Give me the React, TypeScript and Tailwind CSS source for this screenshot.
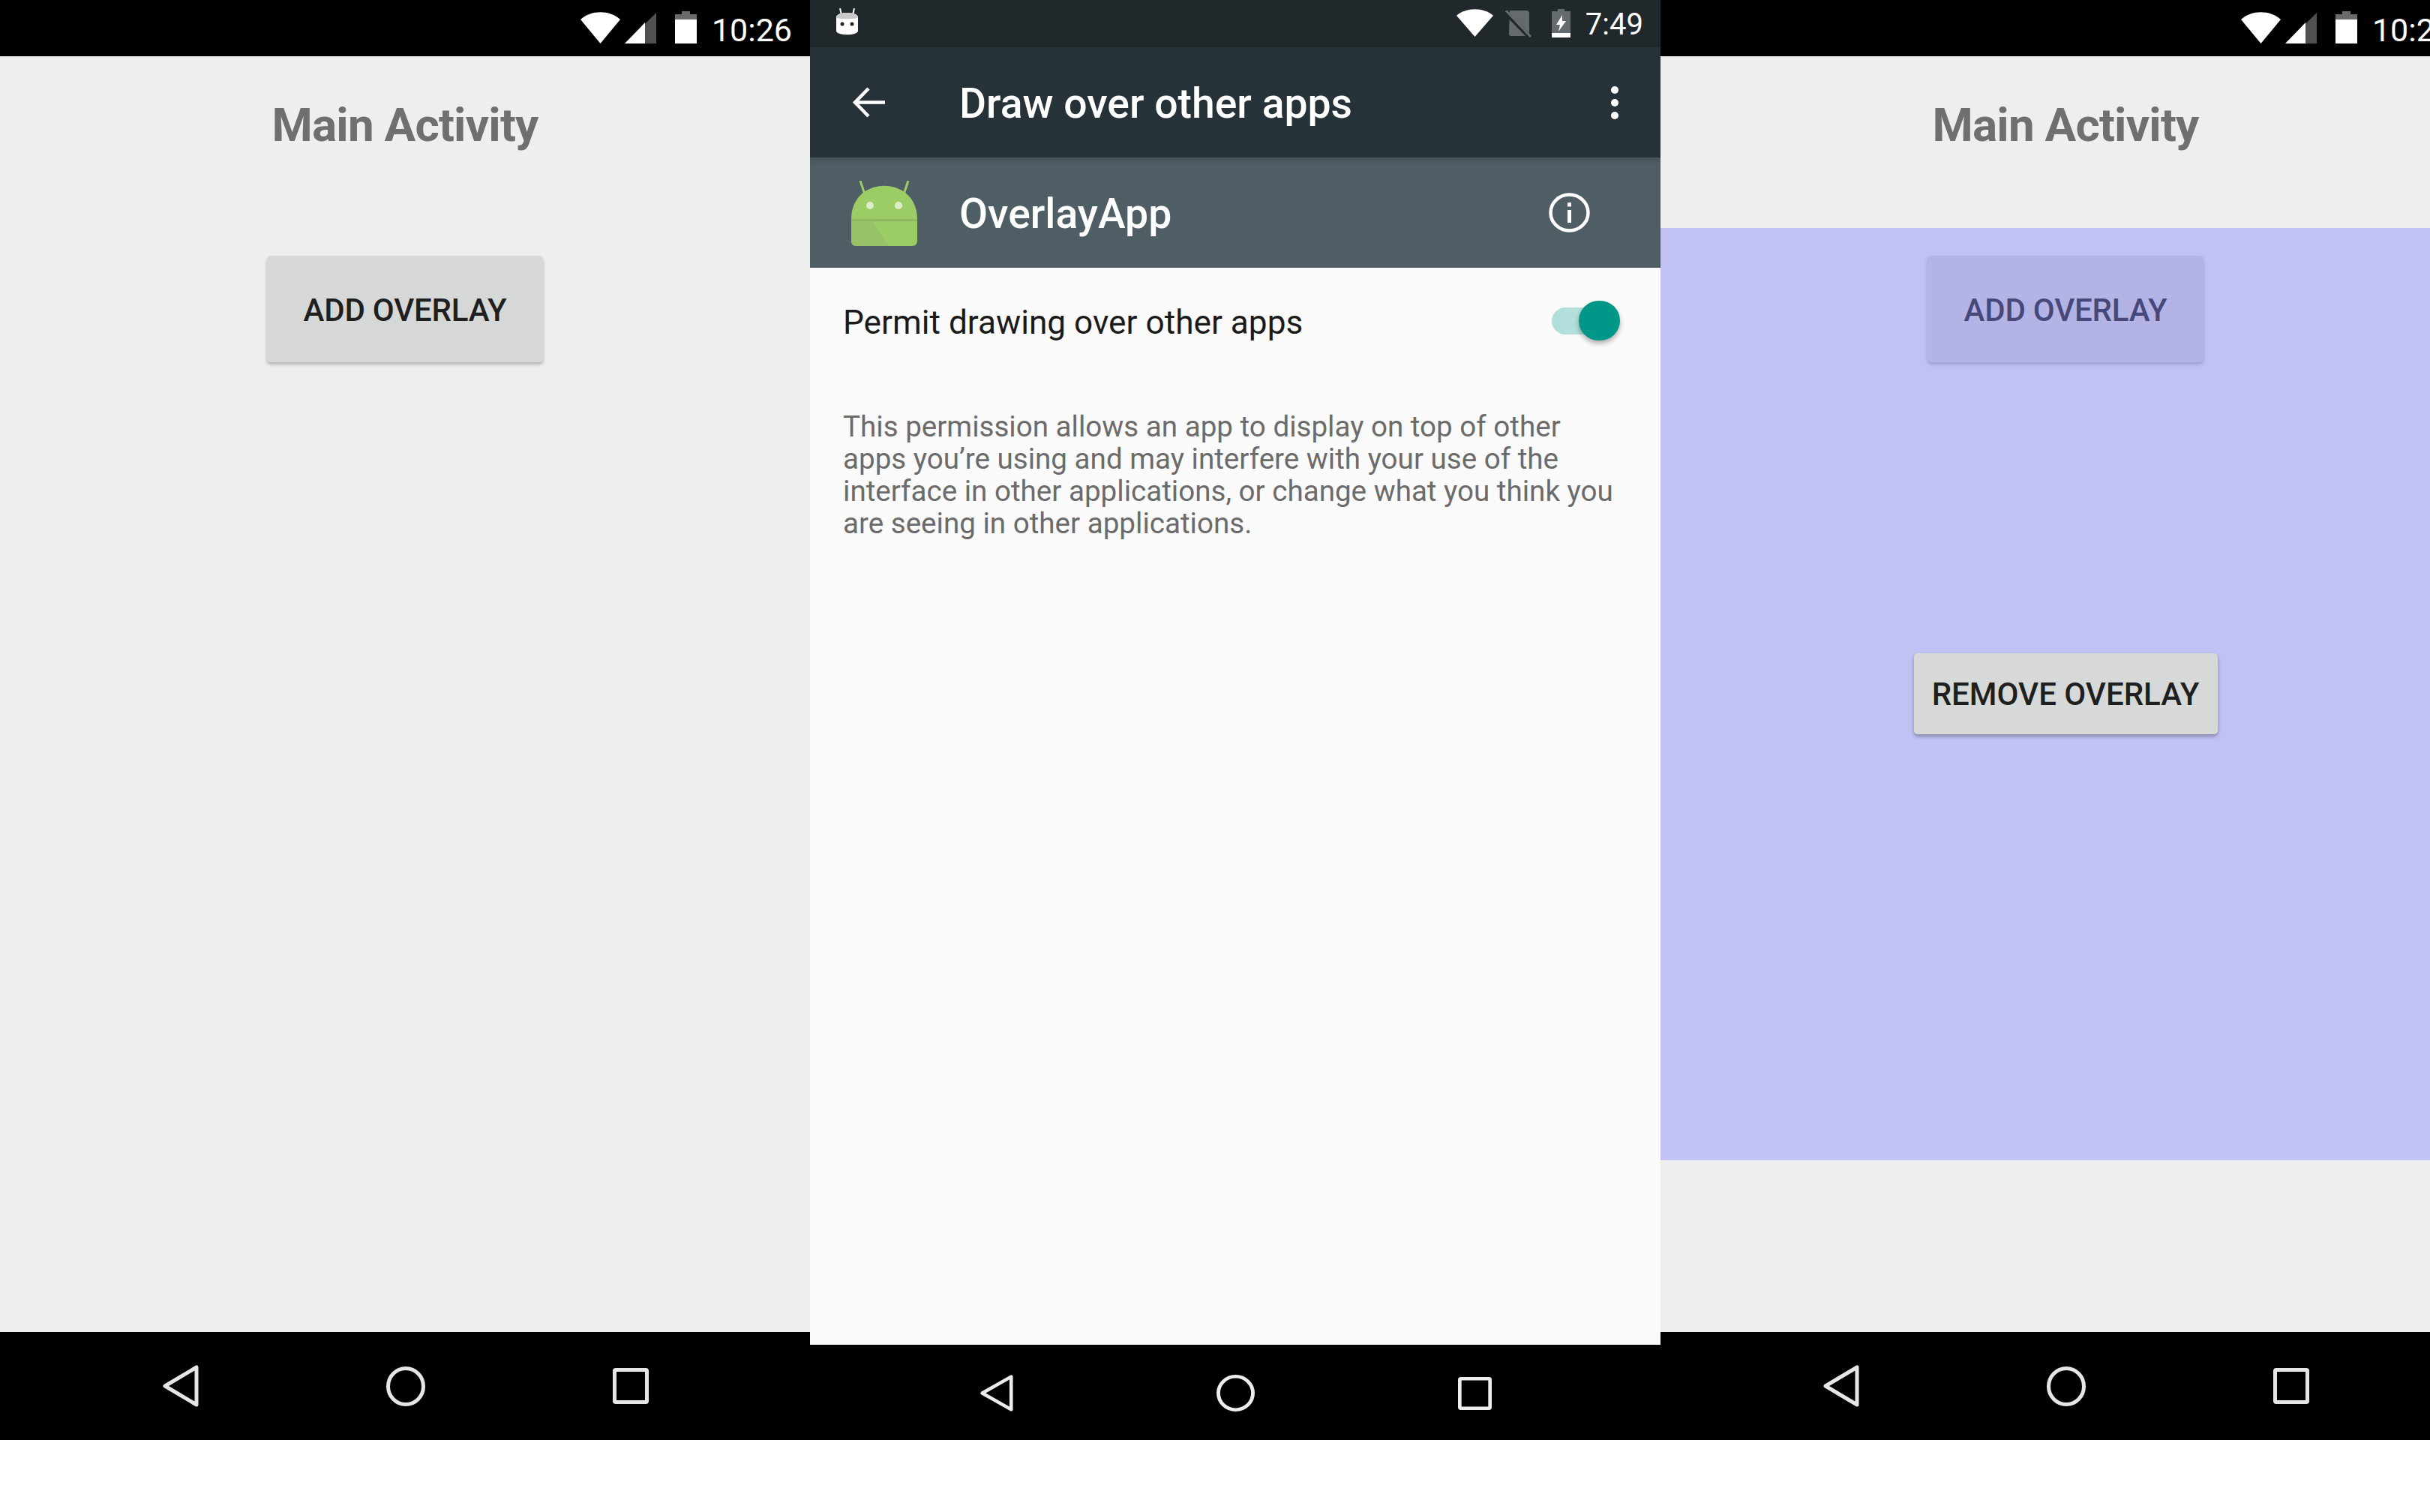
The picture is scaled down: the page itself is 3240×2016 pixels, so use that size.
import React from "react";

const font = { fontFamily: '"Roboto", sans-serif' };

function Wifi({ className }: { className: string }) {
  return (
    <svg className={className} viewBox="0 0 53 42" preserveAspectRatio="none">
      <path d="M0 10 C14 -3 39 -3 53 10 L26.5 42 Z" fill="#fff" />
    </svg>
  );
}

function Signal() {
  return (
    <svg className="w-[42px] h-[41px] ml-[6px] mt-[1px]" viewBox="0 0 42 41">
      <path d="M42 0 V41 H0 Z" fill="#505050" />
      <path d="M19 21.5 L27 13 V41 H0 Z" fill="#fff" />
    </svg>
  );
}

function Battery({ className, charging }: { className: string; charging?: boolean }) {
  if (charging) {
    return (
      <svg className={className} viewBox="0 0 25 38" preserveAspectRatio="none">
        <path d="M8 0 H17 V3 H25 V38 H0 V3 H8 Z" fill="#646a6d" />
        <rect x="0" y="32" width="25" height="6" fill="#fff" />
        <path d="M14 8 L6 21 H11 L9 30 L19 16 H14 Z" fill="#fff" />
      </svg>
    );
  }
  return (
    <svg className={className} viewBox="0 0 29 43">
      <path d="M9 0 H20 V4 H29 V11 H0 V4 H9 Z" fill="#6a6a6a" />
      <rect x="0" y="11" width="29" height="32" fill="#fff" />
    </svg>
  );
}

function NavIcons({ mid }: { mid?: boolean }) {
  const stroke = mid ? "#ededed" : "#e6e6e6";
  return (
    <div className={mid ? "flex items-center justify-center gap-[271px] h-full pt-[2px]" : "flex items-center justify-center gap-[250px] h-full w-[1080px]"}>
      <svg className={mid ? "w-[45px] h-[49px]" : "w-[49px] h-[56px]"} viewBox="0 0 49 56" preserveAspectRatio="none">
        <path d="M46 3 V53 L4 28 Z" fill="none" stroke={stroke} strokeWidth="5" strokeLinejoin="round" />
      </svg>
      <svg className={mid ? "w-[51px] h-[49px]" : "w-[52px] h-[53px]"} viewBox="0 0 52 53" preserveAspectRatio="none">
        <ellipse cx="26" cy="26.5" rx="23.5" ry="24" fill="none" stroke={stroke} strokeWidth="5" />
      </svg>
      <svg className={mid ? "w-[45px] h-[44px]" : "w-[48px] h-[48px]"} viewBox="0 0 48 48" preserveAspectRatio="none">
        <rect x="2.5" y="2.5" width="43" height="43" rx="1.5" fill="none" stroke={stroke} strokeWidth="5" />
      </svg>
    </div>
  );
}

function MainScreen({ overlay }: { overlay?: boolean }) {
  return (
    <div className="relative w-[1080px] h-[1920px] shrink-0 flex flex-col bg-[#eeeeee]">
      <div className="h-[75px] shrink-0 bg-black flex items-start justify-end pr-[24px] text-white">
        <div className="flex items-start mt-[16px]">
          <Wifi className="w-[53px] h-[42px]" />
          <Signal />
          <Battery className="w-[29px] h-[43px] ml-[25px] -mt-[1px]" />
          <span className="ml-[20px] mt-[2px] text-[43px] leading-[44px]">10:26</span>
        </div>
      </div>
      <div className="flex-1 flex flex-col items-center">
        <h1 className="mt-[62px] text-[62px] leading-[60px] font-bold tracking-[-0.8px] text-[#6f6f6f]">Main Activity</h1>
        <div className="mt-[144px] w-[368px] h-[142px] pt-[2px] rounded-[5px] bg-[#d6d7d7] shadow-[0_3px_4px_rgba(0,0,0,0.25)] flex items-center justify-center text-[42px] tracking-[-0.2px] font-medium text-[#1f1f1f]">
          ADD OVERLAY
        </div>
      </div>
      <div className="h-[144px] shrink-0 bg-black">
        <NavIcons />
      </div>
      {overlay && (
        <div className="absolute left-0 right-0 top-[304px] h-[1243px] bg-[#8181fb]/[0.41] flex justify-center">
          <div className="mt-[567px] w-[405px] h-[108px] pt-[1px] rounded-[5px] bg-[#d7d9d9] shadow-[0_3px_5px_rgba(0,0,0,0.3)] flex items-center justify-center text-[42px] font-medium text-[#1f1f1f]">
            REMOVE OVERLAY
          </div>
        </div>
      )}
    </div>
  );
}

function SettingsScreen() {
  return (
    <div className="w-[1134px] h-[1920px] shrink-0 flex flex-col bg-[#fafafa]">
      <div className="h-[63px] shrink-0 bg-[#21282c] flex items-start text-white">
        <svg className="w-[33px] h-[36px] ml-[33px] mt-[11px]" viewBox="0 0 33 36" preserveAspectRatio="none">
          <path d="M7 0 L9 9 M26 0 L24 9" stroke="#fff" strokeWidth="2" />
          <path d="M2 12 C2 4 31 4 31 12 V30 C31 37 2 37 2 30 Z" fill="#fff" />
          <path d="M2 12 C2 4 31 4 31 12 C31 15 2 15 2 12 Z" fill="#c9c9c9" />
          <circle cx="10" cy="21" r="2.5" fill="#21282c" />
          <circle cx="23" cy="21" r="2.5" fill="#21282c" />
        </svg>
        <div className="flex-1" />
        <Wifi className="w-[49px] h-[37px] mt-[12px]" />
        <svg className="w-[37px] h-[36px] ml-[16px] mt-[14px]" viewBox="0 0 37 36" preserveAspectRatio="none">
          <path d="M6 0 H28 Q32 0 32 4 V34 H8 Q5 34 5 31 Z" fill="#646a6d" />
          <path d="M1 3 L33 36" stroke="#21282c" strokeWidth="6" />
          <path d="M1 0 L34 35" stroke="#646a6d" strokeWidth="3" />
        </svg>
        <Battery className="w-[25px] h-[38px] ml-[25px] mt-[12px]" charging />
        <span className="ml-[20px] mr-[23px] mt-[13px] text-[40px] leading-[40px]">7:49</span>
      </div>
      <div className="h-[147px] shrink-0 bg-[#263238] flex items-center text-white">
        <svg className="w-[44px] h-[41px] ml-[56px]" viewBox="0 0 44 41" preserveAspectRatio="none">
          <path d="M44 20.5 H5 M22 2 L4 20.5 L22 39" fill="none" stroke="#fff" strokeWidth="4.5" />
        </svg>
        <span className="ml-[99px] mt-[4px] text-[55.3px] leading-[60px] font-medium flex-1">Draw over other apps</span>
        <div className="flex flex-col gap-[7px] mr-[56px]">
          <span className="block w-[10px] h-[10px] rounded-full bg-white" />
          <span className="block w-[10px] h-[10px] rounded-full bg-white" />
          <span className="block w-[10px] h-[10px] rounded-full bg-white" />
        </div>
      </div>
      <div className="h-[147px] shrink-0 bg-[#4f5e65] flex items-center text-white shadow-[inset_0_8px_8px_-6px_rgba(0,0,0,0.2)]">
        <svg className="w-[88px] h-[87px] ml-[55px] mt-[2px]" viewBox="0 0 88 87" preserveAspectRatio="none">
          <path d="M12 0 L18 18 M76 0 L70 18" stroke="#9ccc65" strokeWidth="3" />
          <path d="M0 51 C0 -8 88 -8 88 51 V80 Q88 87 81 87 H7 Q0 87 0 80 Z" fill="#9ccc65" />
          <path d="M0 51 H88 V54 H0 Z" fill="#8eb863" />
          <path d="M0 54 H28 L49 87 H7 Q0 87 0 80 Z" fill="#97c267" />
          <ellipse cx="25" cy="33" rx="5" ry="5" fill="#dcedc8" />
          <ellipse cx="63" cy="33" rx="5" ry="5" fill="#dcedc8" />
        </svg>
        <span className="ml-[56px] mt-[4px] text-[55.3px] leading-[60px] font-medium flex-1">OverlayApp</span>
        <svg className="w-[55px] h-[53px] mr-[94px]" viewBox="0 0 55 53" preserveAspectRatio="none">
          <ellipse cx="27.5" cy="26.5" rx="25" ry="24" fill="none" stroke="#fff" strokeWidth="4.5" />
          <rect x="25" y="23" width="5" height="17" fill="#fff" />
          <rect x="25" y="13" width="5" height="5.5" fill="#fff" />
        </svg>
      </div>
      <div className="flex-1 flex flex-col pl-[44px] pr-[54px]">
        <div className="mt-[38px] flex items-center justify-between">
          <span className="mt-[5px] text-[44.2px] leading-[60px] text-[#1a1a1a]">Permit drawing over other apps</span>
          <div className="relative w-[91px] h-[53px] flex items-center">
            <div className="w-[61px] h-[36px] rounded-full bg-[#b2dfdb]" />
            <div className="absolute right-0 top-0 w-[55px] h-[53px] rounded-full bg-[#009688] shadow-[0_4px_6px_rgba(0,0,0,0.3)]" />
          </div>
        </div>
        <p className="mt-[87px] text-[38.6px] leading-[43px] text-[#6b6b6b]">
          This permission allows an app to display on top of other
          <br />
          apps you’re using and may interfere with your use of the
          <br />
          interface in other applications, or change what you think you
          <br />
          are seeing in other applications.
        </p>
      </div>
      <div className="h-[127px] shrink-0 bg-black">
        <NavIcons mid />
      </div>
    </div>
  );
}

export default function App() {
  return (
    <div className="w-[3240px] h-[2016px] bg-white overflow-hidden flex items-start" style={font}>
      <MainScreen />
      <SettingsScreen />
      <div className="w-[1026px] h-[1920px] overflow-hidden shrink-0">
        <MainScreen overlay />
      </div>
    </div>
  );
}
